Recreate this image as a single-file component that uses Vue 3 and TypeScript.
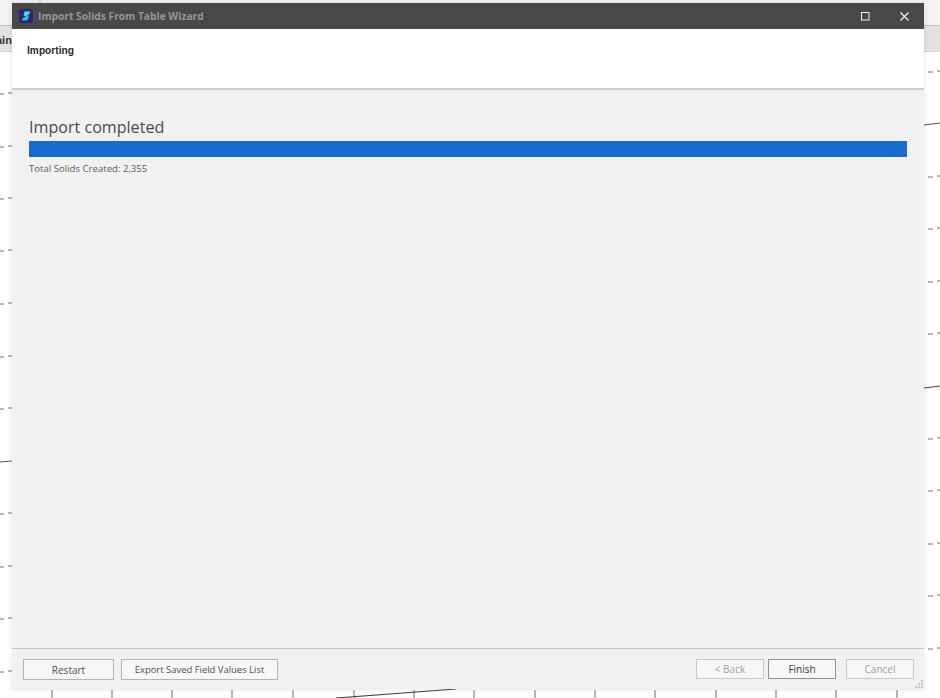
<script setup lang="ts">
const leftTicks: number[] = [94, 147, 199, 251, 304, 357, 409, 514, 567, 619, 672]
const rightTicks: number[] = [72, 177, 229, 282, 334, 439, 491, 544, 596, 649]
const bottomTicks: number[] = [52, 112, 172, 232, 293, 354, 414, 474, 535, 595, 655, 716, 776, 836, 897]
</script>

<template>
  <div class="desktop">
    <svg class="canvas" width="940" height="698" viewBox="0 0 940 698">
      <rect x="0" y="0" width="940" height="25" fill="#f3f3f3" />
      <rect x="0" y="25" width="940" height="26" fill="#e2e2e2" />
      <rect x="0" y="25" width="940" height="1" fill="#c4c4c4" />
      <rect x="0" y="51" width="940" height="1" fill="#d2d2d2" />
      <line x1="40" y1="0" x2="40" y2="3" stroke="#bbb" />
      <g stroke="#707070" stroke-width="1">
        <line v-for="y in leftTicks" :key="'l' + y" x1="0" :y1="y" x2="4" :y2="y" />
        <line v-for="y in leftTicks" :key="'m' + y" x1="8" :y1="y - 1" x2="12" :y2="y - 1" />
        <line v-for="y in rightTicks" :key="'r' + y" x1="928" :y1="y" x2="933" :y2="y" />
        <line v-for="y in rightTicks" :key="'s' + y" x1="937" :y1="y - 1" x2="940" :y2="y - 1" />
        <line v-for="x in bottomTicks" :key="'b' + x" :x1="x" y1="690" :x2="x" y2="698" />
      </g>
      <line x1="0" y1="462" x2="12" y2="461" stroke="#555" />
      <line x1="336" y1="698" x2="456" y2="689" stroke="#444" stroke-width="1.2" />
      <line x1="924" y1="388" x2="940" y2="386" stroke="#444" />
      <line x1="924" y1="125" x2="940" y2="123" stroke="#555" />
    </svg>
    <span class="stray">ain</span>

    <section class="wizard">
      <header class="titlebar">
        <svg class="logo" width="14" height="14" viewBox="0 0 14 14">
          <rect width="14" height="14" rx="2.5" fill="#2d2670" />
          <path d="M5.6 2.6 H11.4 L9.8 5.8 L6.6 7.4 L4.6 6.2 Z" fill="#45e6cf" />
          <path d="M9 6.6 L10 7.6 L8.4 11.4 H2.6 L4.4 8.8 Z" fill="#2fc0ee" />
        </svg>
        <span class="title">Import Solids From Table Wizard</span>
        <span class="spring"></span>
        <svg class="winbtn max" width="9" height="9" viewBox="0 0 9 9">
          <rect x="0.5" y="0.5" width="7.5" height="7.5" fill="none" stroke="#f2f2f2" />
        </svg>
        <svg class="winbtn" width="9" height="9" viewBox="0 0 9 9">
          <path d="M0.5 0.5 L8.5 8.5 M8.5 0.5 L0.5 8.5" stroke="#f2f2f2" stroke-width="1.2" />
        </svg>
      </header>

      <div class="banner">Importing</div>

      <main class="content">
        <h1 class="heading">Import completed</h1>
        <div class="progress"></div>
        <p class="status">Total Solids Created: 2,355</p>
      </main>

      <footer class="actions">
        <button class="btn restart" type="button">Restart</button>
        <button class="btn export" type="button">Export Saved Field Values List</button>
        <span class="spring"></span>
        <button class="btn nav muted" type="button">&lt; Back</button>
        <button class="btn nav finish" type="button">Finish</button>
        <button class="btn nav muted cancel" type="button">Cancel</button>
      </footer>
      <svg class="grip" width="9" height="9" viewBox="0 0 9 9">
        <g fill="#c4c4c4">
          <rect x="6" y="0" width="2" height="2" />
          <rect x="3" y="3" width="2" height="2" />
          <rect x="6" y="3" width="2" height="2" />
          <rect x="0" y="6" width="2" height="2" />
          <rect x="3" y="6" width="2" height="2" />
          <rect x="6" y="6" width="2" height="2" />
        </g>
      </svg>
    </section>
  </div>
</template>

<style>
html,
body {
  margin: 0;
  background: #fff;
}
</style>

<style scoped>
.desktop {
  position: relative;
  width: 940px;
  height: 698px;
  overflow: hidden;
  background: #fff;
  font-family: "Open Sans", "Liberation Sans", sans-serif;
}
.canvas {
  position: absolute;
  left: 0;
  top: 0;
}
.stray {
  position: absolute;
  left: -4px;
  top: 34px;
  font: bold 11px "Liberation Sans", sans-serif;
  color: #333;
}
.wizard {
  position: absolute;
  left: 12px;
  top: 3px;
  width: 912px;
  height: 686px;
  display: flex;
  flex-direction: column;
  background: #f1f1f1;
  box-shadow: 0 0 5px rgba(0, 0, 0, 0.12);
}
.titlebar {
  flex: 0 0 26px;
  display: flex;
  align-items: center;
  padding: 0 15px 0 7px;
  background: #484848;
  box-sizing: border-box;
}
.logo {
  flex: none;
  margin-right: 5px;
}
.title {
  font-size: 10.25px;
  font-weight: 700;
  color: #969696;
}
.spring {
  flex: 1;
}
.winbtn {
  flex: none;
}
.max {
  margin-right: 30px;
}
.banner {
  flex: 0 0 61px;
  box-sizing: border-box;
  padding: 15px 15px;
  background: #fff;
  border-bottom: 2px solid #cecece;
  font: bold 10.2px/14px "Liberation Sans", sans-serif;
  color: #2a2a2a;
}
.content {
  flex: 1;
  padding: 26px 17px 0;
}
.heading {
  margin: 0;
  font-size: 16.1px;
  line-height: 22px;
  font-weight: 400;
  color: #4a4a4a;
}
.progress {
  height: 16px;
  margin-top: 3px;
  background: #1a6bd0;
}
.status {
  margin: 5px 0 0;
  font-size: 9.6px;
  line-height: 14px;
  color: #5c5c5c;
}
.actions {
  flex: 0 0 41px;
  box-sizing: border-box;
  display: flex;
  align-items: flex-start;
  padding: 10px 10px 0 11px;
  border-top: 1px solid #c4c4c4;
}
.btn {
  height: 21px;
  padding: 0;
  background: #f7f7f7;
  border: 1px solid #b4b4b4;
  border-radius: 0;
  font-family: inherit;
  font-size: 10px;
  color: #505050;
}
.restart {
  width: 91px;
}
.export {
  width: 157px;
  margin-left: 7px;
  font-size: 9.45px;
}
.nav {
  width: 68px;
  height: 20px;
}
.muted {
  border-color: #c9c9c9;
  color: #a0a0a0;
}
.finish {
  margin-left: 4px;
  border-color: #8f8f8f;
  color: #3a3a3a;
}
.cancel {
  margin-left: 10px;
}
.grip {
  position: absolute;
  right: 0;
  bottom: 0;
}
</style>
